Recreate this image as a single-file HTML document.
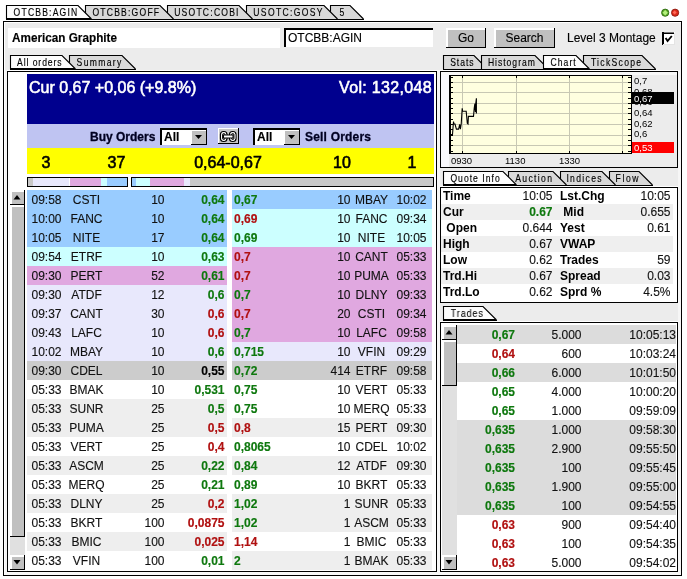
<!DOCTYPE html><html><head><meta charset="utf-8"><style>
html,body{margin:0;padding:0;background:#fff;}
body{width:687px;height:579px;overflow:hidden;position:relative;font-family:"Liberation Sans", sans-serif;}
svg{position:absolute;left:0;top:0;will-change:transform;}
text{font-family:"Liberation Sans", sans-serif;}
</style></head><body>
<svg width="687" height="579" viewBox="0 0 687 579" shape-rendering="crispEdges">
<rect x="3" y="21" width="679" height="555" fill="#ececec"/>
<rect x="3" y="21" width="679" height="1" fill="#000"/>
<rect x="3" y="575" width="679" height="1" fill="#000"/>
<rect x="3" y="21" width="1" height="555" fill="#000"/>
<rect x="681" y="21" width="1" height="555" fill="#000"/>
<rect x="4" y="70" width="3" height="505" fill="#f6f6f6"/>
<rect x="437" y="70" width="3" height="505" fill="#f6f6f6"/>
<rect x="678" y="70" width="3" height="505" fill="#f6f6f6"/>
<rect x="4" y="572" width="677" height="3" fill="#f8f8f8"/>
<rect x="4" y="22" width="677" height="1" fill="#fff"/>
<rect x="4" y="22" width="1" height="553" fill="#fff"/>
<g shape-rendering="auto">
<polygon points="330.5,19 330.5,5.5 350,5.5 363.5,19" fill="#d9d9d9" stroke="none"/><polyline points="330.5,19 330.5,5.5 350,5.5 363.5,19" fill="none" stroke="#000" stroke-width="1.1"/><text transform="translate(339.40000000000003,16) scale(0.86,1)" font-size="10" textLength="7.44" lengthAdjust="spacing" fill="#000" stroke="#000" stroke-width="0.14">5</text><polygon points="246.5,19 246.5,5.5 324,5.5 337.5,19" fill="#d9d9d9" stroke="none"/><polyline points="246.5,19 246.5,5.5 324,5.5 337.5,19" fill="none" stroke="#000" stroke-width="1.1"/><text transform="translate(253.29999999999998,16) scale(0.86,1)" font-size="10" textLength="80.47" lengthAdjust="spacing" fill="#000" stroke="#000" stroke-width="0.14">USOTC:GOSY</text><polygon points="167.5,19 167.5,5.5 239,5.5 252.5,19" fill="#d9d9d9" stroke="none"/><polyline points="167.5,19 167.5,5.5 239,5.5 252.5,19" fill="none" stroke="#000" stroke-width="1.1"/><text transform="translate(174.2,16) scale(0.86,1)" font-size="10" textLength="74.77" lengthAdjust="spacing" fill="#000" stroke="#000" stroke-width="0.14">USOTC:COBI</text><polygon points="85.5,19 85.5,5.5 160,5.5 173.5,19" fill="#d9d9d9" stroke="none"/><polyline points="85.5,19 85.5,5.5 160,5.5 173.5,19" fill="none" stroke="#000" stroke-width="1.1"/><text transform="translate(92.39999999999999,16) scale(0.86,1)" font-size="10" textLength="77.56" lengthAdjust="spacing" fill="#000" stroke="#000" stroke-width="0.14">OTCBB:GOFF</text><polygon points="6.5,19 6.5,5.5 78,5.5 91.5,19" fill="#fcfcfc" stroke="none"/><polyline points="6.5,19 6.5,5.5 78,5.5 91.5,19" fill="none" stroke="#000" stroke-width="1.1"/><text transform="translate(13.6,16) scale(0.86,1)" font-size="10" textLength="73.95" lengthAdjust="spacing" fill="#000" stroke="#000" stroke-width="0.14">OTCBB:AGIN</text><rect x="6" y="19" width="358" height="1" fill="#000"/><rect x="6" y="18" width="85" height="1" fill="#000"/>
</g>
<rect x="0" y="20" width="687" height="1" fill="#fff"/>
<rect x="3" y="21" width="679" height="1" fill="#000"/>
<g shape-rendering="auto">
<circle cx="665.2" cy="12.7" r="3.6" fill="#5aa828" stroke="#2f6a12" stroke-width="0.9"/>
<polygon points="665.2,10 667.9,12.7 665.2,15.4 662.5,12.7" fill="#b4f07c"/>
<circle cx="675.1" cy="12.7" r="3.6" fill="#dd2a1c" stroke="#8a1a10" stroke-width="0.9"/>
<polygon points="674.6,10.5 676.6,12.5 674.6,14.5 672.6,12.5" fill="#ff6a58"/>
</g>
<rect x="8" y="28" width="272" height="20" fill="#ffffff"/>
<text x="12" y="42" font-size="12" font-weight="bold" fill="#000" text-anchor="start" textLength="105" lengthAdjust="spacingAndGlyphs" stroke="#000" stroke-width="0.15">American Graphite</text>
<rect x="284" y="28" width="149" height="19" fill="#fff"/>
<rect x="284" y="28" width="149" height="2" fill="#000"/>
<rect x="284" y="28" width="2" height="19" fill="#000"/>
<text x="288" y="42" font-size="12" fill="#000" text-anchor="start" stroke="#000" stroke-width="0.12">OTCBB:AGIN</text>
<g>
<rect x="446" y="28" width="40" height="20" fill="#c0c0c0"/><rect x="446" y="28" width="40" height="2" fill="#fff"/><rect x="446" y="28" width="2" height="20" fill="#fff"/><rect x="446" y="47" width="40" height="1" fill="#000"/><rect x="485" y="28" width="1" height="20" fill="#000"/><text x="466.0" y="42" font-size="12" fill="#000" text-anchor="middle" stroke="#000" stroke-width="0.12">Go</text>
<rect x="494" y="28" width="61" height="20" fill="#c0c0c0"/><rect x="494" y="28" width="61" height="2" fill="#fff"/><rect x="494" y="28" width="2" height="20" fill="#fff"/><rect x="494" y="47" width="61" height="1" fill="#000"/><rect x="554" y="28" width="1" height="20" fill="#000"/><text x="524.5" y="42" font-size="12" fill="#000" text-anchor="middle" stroke="#000" stroke-width="0.12">Search</text>
</g>
<text x="567" y="42" font-size="12" fill="#000" text-anchor="start" stroke="#000" stroke-width="0.12">Level 3 Montage</text>
<rect x="662" y="32" width="13" height="13" fill="#fff"/>
<rect x="662" y="32" width="12" height="1" fill="#777"/>
<rect x="662" y="33" width="12" height="1" fill="#000"/>
<rect x="662" y="32" width="2" height="13" fill="#000"/>
<rect x="663" y="44" width="12" height="1" fill="#e4e4e4"/>
<rect x="674" y="33" width="1" height="12" fill="#e4e4e4"/>
<path d="M665.6 38 L667.6 41 L671.8 36" fill="none" stroke="#000" stroke-width="1.9" stroke-linecap="butt" shape-rendering="auto"/>
<g shape-rendering="auto">
<polygon points="69.5,69 69.5,55.5 122,55.5 135.5,69" fill="#d9d9d9" stroke="none"/><polyline points="69.5,69 69.5,55.5 122,55.5 135.5,69" fill="none" stroke="#000" stroke-width="1.1"/><text transform="translate(76.6,66) scale(0.86,1)" font-size="10" textLength="51.86" lengthAdjust="spacing" fill="#000" stroke="#000" stroke-width="0.14">Summary</text><polygon points="10.5,69 10.5,55.5 62,55.5 75.5,69" fill="#fcfcfc" stroke="none"/><polyline points="10.5,69 10.5,55.5 62,55.5 75.5,69" fill="none" stroke="#000" stroke-width="1.1"/><text transform="translate(17.1,66) scale(0.86,1)" font-size="10" textLength="51.74" lengthAdjust="spacing" fill="#000" stroke="#000" stroke-width="0.14">All orders</text><rect x="10" y="69" width="126" height="1" fill="#000"/><rect x="10" y="68" width="65" height="1" fill="#000"/>
<polygon points="443.5,69 443.5,55.5 474,55.5 487.5,69" fill="#d9d9d9" stroke="none"/><polyline points="443.5,69 443.5,55.5 474,55.5 487.5,69" fill="none" stroke="#000" stroke-width="1.1"/><text transform="translate(450.20000000000005,66) scale(0.86,1)" font-size="10" textLength="27.09" lengthAdjust="spacing" fill="#000" stroke="#000" stroke-width="0.14">Stats</text><polygon points="481.5,69 481.5,55.5 535,55.5 548.5,69" fill="#d9d9d9" stroke="none"/><polyline points="481.5,69 481.5,55.5 535,55.5 548.5,69" fill="none" stroke="#000" stroke-width="1.1"/><text transform="translate(487.90000000000003,66) scale(0.86,1)" font-size="10" textLength="54.65" lengthAdjust="spacing" fill="#000" stroke="#000" stroke-width="0.14">Histogram</text><polygon points="583.5,69 583.5,55.5 642,55.5 655.5,69" fill="#d9d9d9" stroke="none"/><polyline points="583.5,69 583.5,55.5 642,55.5 655.5,69" fill="none" stroke="#000" stroke-width="1.1"/><text transform="translate(590.9,66) scale(0.86,1)" font-size="10" textLength="58.37" lengthAdjust="spacing" fill="#000" stroke="#000" stroke-width="0.14">TickScope</text><polygon points="543.5,69 543.5,55.5 576,55.5 589.5,69" fill="#fcfcfc" stroke="none"/><polyline points="543.5,69 543.5,55.5 576,55.5 589.5,69" fill="none" stroke="#000" stroke-width="1.1"/><text transform="translate(550.6,66) scale(0.86,1)" font-size="10" textLength="29.19" lengthAdjust="spacing" fill="#000" stroke="#000" stroke-width="0.14">Chart</text><rect x="443" y="69" width="213" height="1" fill="#000"/><rect x="543" y="68" width="46" height="1" fill="#000"/>
</g>
<rect x="7" y="70" width="430" height="1" fill="#fff"/>
<rect x="440" y="70" width="238" height="1" fill="#fff"/>
<rect x="7" y="71" width="430" height="501" fill="#fff"/>
<rect x="7" y="71" width="430" height="1" fill="#000"/>
<rect x="7" y="571" width="430" height="1" fill="#000"/>
<rect x="7" y="71" width="1" height="501" fill="#000"/>
<rect x="436" y="71" width="1" height="501" fill="#000"/>
<rect x="27" y="74" width="407" height="50" fill="#00008e"/>
<text x="29" y="93" font-size="16" fill="#fff" text-anchor="start" stroke="#fff" stroke-width="0.55">Cur 0,67 +0,06 (+9.8%)</text>
<text x="432" y="93" font-size="16" fill="#fff" text-anchor="end" letter-spacing="0.33" stroke="#fff" stroke-width="0.55">Vol: 132,048</text>
<rect x="27" y="124" width="407" height="24" fill="#bfc4f2"/>
<text x="90" y="141" font-size="12" font-weight="bold" fill="#000022" text-anchor="start" stroke="#000022" stroke-width="0.3">Buy Orders</text>
<text x="305" y="141" font-size="12" font-weight="bold" fill="#000022" text-anchor="start" letter-spacing="0.2" stroke="#000022" stroke-width="0.3">Sell Orders</text>
<rect x="160" y="128" width="47" height="17" fill="#fff"/><rect x="160" y="128" width="47" height="2" fill="#000"/><rect x="160" y="128" width="2" height="17" fill="#000"/><rect x="191" y="130" width="15" height="14" fill="#c0c0c0"/><rect x="191" y="130" width="15" height="1" fill="#fff"/><rect x="191" y="130" width="1" height="14" fill="#fff"/><rect x="191" y="144" width="16" height="1" fill="#000"/><rect x="206" y="128" width="1" height="17" fill="#000"/><path d="M195 135 L202 135 L198.5 139 Z" fill="#000" shape-rendering="auto"/><text x="164" y="141" font-size="12" font-weight="bold" fill="#000" text-anchor="start" stroke="#000" stroke-width="0.15">All</text>
<rect x="253" y="128" width="47" height="17" fill="#fff"/><rect x="253" y="128" width="47" height="2" fill="#000"/><rect x="253" y="128" width="2" height="17" fill="#000"/><rect x="284" y="130" width="15" height="14" fill="#c0c0c0"/><rect x="284" y="130" width="15" height="1" fill="#fff"/><rect x="284" y="130" width="1" height="14" fill="#fff"/><rect x="284" y="144" width="16" height="1" fill="#000"/><rect x="299" y="128" width="1" height="17" fill="#000"/><path d="M288 135 L295 135 L291.5 139 Z" fill="#000" shape-rendering="auto"/><text x="257" y="141" font-size="12" font-weight="bold" fill="#000" text-anchor="start" stroke="#000" stroke-width="0.15">All</text>
<rect x="218" y="128" width="21" height="16" fill="#c8c8c8"/>
<rect x="218" y="128" width="21" height="1" fill="#fff"/>
<rect x="218" y="128" width="1" height="16" fill="#fff"/>
<rect x="218" y="143" width="21" height="1" fill="#000"/>
<rect x="238" y="128" width="1" height="16" fill="#000"/>
<g shape-rendering="auto"><rect x="220.5" y="131.5" width="6.5" height="10" rx="3" fill="none" stroke="#000" stroke-width="1.2"/><rect x="221.6" y="132.6" width="4.3" height="7.8" rx="2" fill="none" stroke="#fff" stroke-width="1"/><rect x="222.6" y="133.6" width="2.3" height="5.8" rx="1" fill="none" stroke="#000" stroke-width="1"/><rect x="229.5" y="131.5" width="6.5" height="10" rx="3" fill="none" stroke="#000" stroke-width="1.2"/><rect x="230.6" y="132.6" width="4.3" height="7.8" rx="2" fill="none" stroke="#fff" stroke-width="1"/><rect x="231.6" y="133.6" width="2.3" height="5.8" rx="1" fill="none" stroke="#000" stroke-width="1"/><rect x="223.5" y="135" width="9.5" height="3" fill="#fff" stroke="#000" stroke-width="1"/></g>
<rect x="27" y="148" width="407" height="26" fill="#ffff00"/>
<text x="46" y="167.5" font-size="16" fill="#000" text-anchor="middle" stroke="#000" stroke-width="0.6">3</text>
<text x="116.5" y="167.5" font-size="16" fill="#000" text-anchor="middle" stroke="#000" stroke-width="0.6">37</text>
<text x="228" y="167.5" font-size="16" fill="#000" text-anchor="middle" stroke="#000" stroke-width="0.6">0,64-0,67</text>
<text x="342" y="167.5" font-size="16" fill="#000" text-anchor="middle" stroke="#000" stroke-width="0.6">10</text>
<text x="412" y="167.5" font-size="16" fill="#000" text-anchor="middle" stroke="#000" stroke-width="0.6">1</text>
<rect x="27" y="177" width="101" height="10" fill="#000"/><rect x="28" y="178" width="5" height="8" fill="#c8c8c8"/><rect x="33" y="178" width="36" height="8" fill="#e8e8fc"/><rect x="69" y="178" width="1" height="8" fill="#fff"/><rect x="70" y="178" width="31" height="8" fill="#e0a8e0"/><rect x="101" y="178" width="6" height="8" fill="#ccffff"/><rect x="107" y="178" width="20" height="8" fill="#99ccff"/>
<rect x="131" y="177" width="303" height="10" fill="#000"/><rect x="132" y="178" width="4" height="8" fill="#99ccff"/><rect x="136" y="178" width="14" height="8" fill="#ccffff"/><rect x="150" y="178" width="34" height="8" fill="#e0a8e0"/><rect x="184" y="178" width="6" height="8" fill="#e8e8fc"/><rect x="190" y="178" width="243" height="8" fill="#c8c8c8"/>
<rect x="10" y="190" width="15" height="380" fill="#e0e0e0"/><rect x="10" y="190" width="15" height="15" fill="#c0c0c0"/><rect x="10" y="190" width="15" height="2" fill="#fff"/><rect x="10" y="190" width="2" height="15" fill="#fff"/><rect x="10" y="204" width="15" height="1" fill="#000"/><path d="M13.5 199.5 L20.5 199.5 L17.0 195 Z" fill="#000" shape-rendering="auto"/><rect x="10" y="205" width="15" height="332" fill="#c0c0c0"/><rect x="10" y="205" width="15" height="2" fill="#fff"/><rect x="10" y="205" width="2" height="332" fill="#fff"/><rect x="10" y="536" width="15" height="1" fill="#000"/><rect x="10" y="555" width="15" height="15" fill="#c0c0c0"/><rect x="10" y="555" width="15" height="2" fill="#fff"/><rect x="10" y="555" width="2" height="15" fill="#fff"/><rect x="10" y="569" width="15" height="1" fill="#000"/><path d="M13.5 560 L20.5 560 L17.0 564.5 Z" fill="#000" shape-rendering="auto"/><rect x="24" y="190" width="1" height="15" fill="#000"/><rect x="24" y="205" width="1" height="332" fill="#000"/><rect x="24" y="555" width="1" height="15" fill="#000"/>
<rect x="27" y="190" width="200" height="19" fill="#99ccff"/>
<text x="31.5" y="204" font-size="12" fill="#111" text-anchor="start" stroke="#111" stroke-width="0.12">09:58</text>
<text x="86.5" y="204" font-size="12" fill="#111" text-anchor="middle" stroke="#111" stroke-width="0.12">CSTI</text>
<text x="164.5" y="204" font-size="12" fill="#111" text-anchor="end" stroke="#111" stroke-width="0.12">10</text>
<text x="224.5" y="204" font-size="12" font-weight="bold" fill="#0e780e" text-anchor="end" stroke="#0e780e" stroke-width="0.15">0,64</text>
<rect x="27" y="209" width="200" height="19" fill="#99ccff"/>
<text x="31.5" y="223" font-size="12" fill="#111" text-anchor="start" stroke="#111" stroke-width="0.12">10:00</text>
<text x="86.5" y="223" font-size="12" fill="#111" text-anchor="middle" stroke="#111" stroke-width="0.12">FANC</text>
<text x="164.5" y="223" font-size="12" fill="#111" text-anchor="end" stroke="#111" stroke-width="0.12">10</text>
<text x="224.5" y="223" font-size="12" font-weight="bold" fill="#0e780e" text-anchor="end" stroke="#0e780e" stroke-width="0.15">0,64</text>
<rect x="27" y="228" width="200" height="19" fill="#99ccff"/>
<text x="31.5" y="242" font-size="12" fill="#111" text-anchor="start" stroke="#111" stroke-width="0.12">10:05</text>
<text x="86.5" y="242" font-size="12" fill="#111" text-anchor="middle" stroke="#111" stroke-width="0.12">NITE</text>
<text x="164.5" y="242" font-size="12" fill="#111" text-anchor="end" stroke="#111" stroke-width="0.12">17</text>
<text x="224.5" y="242" font-size="12" font-weight="bold" fill="#0e780e" text-anchor="end" stroke="#0e780e" stroke-width="0.15">0,64</text>
<rect x="27" y="247" width="200" height="19" fill="#ccffff"/>
<text x="31.5" y="261" font-size="12" fill="#111" text-anchor="start" stroke="#111" stroke-width="0.12">09:54</text>
<text x="86.5" y="261" font-size="12" fill="#111" text-anchor="middle" stroke="#111" stroke-width="0.12">ETRF</text>
<text x="164.5" y="261" font-size="12" fill="#111" text-anchor="end" stroke="#111" stroke-width="0.12">10</text>
<text x="224.5" y="261" font-size="12" font-weight="bold" fill="#0e780e" text-anchor="end" stroke="#0e780e" stroke-width="0.15">0,63</text>
<rect x="27" y="266" width="200" height="19" fill="#e0a8e0"/>
<text x="31.5" y="280" font-size="12" fill="#111" text-anchor="start" stroke="#111" stroke-width="0.12">09:30</text>
<text x="86.5" y="280" font-size="12" fill="#111" text-anchor="middle" stroke="#111" stroke-width="0.12">PERT</text>
<text x="164.5" y="280" font-size="12" fill="#111" text-anchor="end" stroke="#111" stroke-width="0.12">52</text>
<text x="224.5" y="280" font-size="12" font-weight="bold" fill="#0e780e" text-anchor="end" stroke="#0e780e" stroke-width="0.15">0,61</text>
<rect x="27" y="285" width="200" height="19" fill="#e8e8fc"/>
<text x="31.5" y="299" font-size="12" fill="#111" text-anchor="start" stroke="#111" stroke-width="0.12">09:30</text>
<text x="86.5" y="299" font-size="12" fill="#111" text-anchor="middle" stroke="#111" stroke-width="0.12">ATDF</text>
<text x="164.5" y="299" font-size="12" fill="#111" text-anchor="end" stroke="#111" stroke-width="0.12">12</text>
<text x="224.5" y="299" font-size="12" font-weight="bold" fill="#0e780e" text-anchor="end" stroke="#0e780e" stroke-width="0.15">0,6</text>
<rect x="27" y="304" width="200" height="19" fill="#e8e8fc"/>
<text x="31.5" y="318" font-size="12" fill="#111" text-anchor="start" stroke="#111" stroke-width="0.12">09:37</text>
<text x="86.5" y="318" font-size="12" fill="#111" text-anchor="middle" stroke="#111" stroke-width="0.12">CANT</text>
<text x="164.5" y="318" font-size="12" fill="#111" text-anchor="end" stroke="#111" stroke-width="0.12">30</text>
<text x="224.5" y="318" font-size="12" font-weight="bold" fill="#b01010" text-anchor="end" stroke="#b01010" stroke-width="0.15">0,6</text>
<rect x="27" y="323" width="200" height="19" fill="#e8e8fc"/>
<text x="31.5" y="337" font-size="12" fill="#111" text-anchor="start" stroke="#111" stroke-width="0.12">09:43</text>
<text x="86.5" y="337" font-size="12" fill="#111" text-anchor="middle" stroke="#111" stroke-width="0.12">LAFC</text>
<text x="164.5" y="337" font-size="12" fill="#111" text-anchor="end" stroke="#111" stroke-width="0.12">10</text>
<text x="224.5" y="337" font-size="12" font-weight="bold" fill="#b01010" text-anchor="end" stroke="#b01010" stroke-width="0.15">0,6</text>
<rect x="27" y="342" width="200" height="19" fill="#e8e8fc"/>
<text x="31.5" y="356" font-size="12" fill="#111" text-anchor="start" stroke="#111" stroke-width="0.12">10:02</text>
<text x="86.5" y="356" font-size="12" fill="#111" text-anchor="middle" stroke="#111" stroke-width="0.12">MBAY</text>
<text x="164.5" y="356" font-size="12" fill="#111" text-anchor="end" stroke="#111" stroke-width="0.12">10</text>
<text x="224.5" y="356" font-size="12" font-weight="bold" fill="#0e780e" text-anchor="end" stroke="#0e780e" stroke-width="0.15">0,6</text>
<rect x="27" y="361" width="200" height="19" fill="#cccccc"/>
<text x="31.5" y="375" font-size="12" fill="#111" text-anchor="start" stroke="#111" stroke-width="0.12">09:30</text>
<text x="86.5" y="375" font-size="12" fill="#111" text-anchor="middle" stroke="#111" stroke-width="0.12">CDEL</text>
<text x="164.5" y="375" font-size="12" fill="#111" text-anchor="end" stroke="#111" stroke-width="0.12">10</text>
<text x="224.5" y="375" font-size="12" font-weight="bold" fill="#000" text-anchor="end" stroke="#000" stroke-width="0.15">0,55</text>
<rect x="27" y="380" width="200" height="19" fill="#ffffff"/>
<text x="31.5" y="394" font-size="12" fill="#111" text-anchor="start" stroke="#111" stroke-width="0.12">05:33</text>
<text x="86.5" y="394" font-size="12" fill="#111" text-anchor="middle" stroke="#111" stroke-width="0.12">BMAK</text>
<text x="164.5" y="394" font-size="12" fill="#111" text-anchor="end" stroke="#111" stroke-width="0.12">10</text>
<text x="224.5" y="394" font-size="12" font-weight="bold" fill="#0e780e" text-anchor="end" stroke="#0e780e" stroke-width="0.15">0,531</text>
<rect x="27" y="399" width="200" height="19" fill="#eeeeee"/>
<text x="31.5" y="413" font-size="12" fill="#111" text-anchor="start" stroke="#111" stroke-width="0.12">05:33</text>
<text x="86.5" y="413" font-size="12" fill="#111" text-anchor="middle" stroke="#111" stroke-width="0.12">SUNR</text>
<text x="164.5" y="413" font-size="12" fill="#111" text-anchor="end" stroke="#111" stroke-width="0.12">25</text>
<text x="224.5" y="413" font-size="12" font-weight="bold" fill="#0e780e" text-anchor="end" stroke="#0e780e" stroke-width="0.15">0,5</text>
<rect x="27" y="418" width="200" height="19" fill="#eeeeee"/>
<text x="31.5" y="432" font-size="12" fill="#111" text-anchor="start" stroke="#111" stroke-width="0.12">05:33</text>
<text x="86.5" y="432" font-size="12" fill="#111" text-anchor="middle" stroke="#111" stroke-width="0.12">PUMA</text>
<text x="164.5" y="432" font-size="12" fill="#111" text-anchor="end" stroke="#111" stroke-width="0.12">25</text>
<text x="224.5" y="432" font-size="12" font-weight="bold" fill="#b01010" text-anchor="end" stroke="#b01010" stroke-width="0.15">0,5</text>
<rect x="27" y="437" width="200" height="19" fill="#ffffff"/>
<text x="31.5" y="451" font-size="12" fill="#111" text-anchor="start" stroke="#111" stroke-width="0.12">05:33</text>
<text x="86.5" y="451" font-size="12" fill="#111" text-anchor="middle" stroke="#111" stroke-width="0.12">VERT</text>
<text x="164.5" y="451" font-size="12" fill="#111" text-anchor="end" stroke="#111" stroke-width="0.12">25</text>
<text x="224.5" y="451" font-size="12" font-weight="bold" fill="#b01010" text-anchor="end" stroke="#b01010" stroke-width="0.15">0,4</text>
<rect x="27" y="456" width="200" height="19" fill="#eeeeee"/>
<text x="31.5" y="470" font-size="12" fill="#111" text-anchor="start" stroke="#111" stroke-width="0.12">05:33</text>
<text x="86.5" y="470" font-size="12" fill="#111" text-anchor="middle" stroke="#111" stroke-width="0.12">ASCM</text>
<text x="164.5" y="470" font-size="12" fill="#111" text-anchor="end" stroke="#111" stroke-width="0.12">25</text>
<text x="224.5" y="470" font-size="12" font-weight="bold" fill="#0e780e" text-anchor="end" stroke="#0e780e" stroke-width="0.15">0,22</text>
<rect x="27" y="475" width="200" height="19" fill="#ffffff"/>
<text x="31.5" y="489" font-size="12" fill="#111" text-anchor="start" stroke="#111" stroke-width="0.12">05:33</text>
<text x="86.5" y="489" font-size="12" fill="#111" text-anchor="middle" stroke="#111" stroke-width="0.12">MERQ</text>
<text x="164.5" y="489" font-size="12" fill="#111" text-anchor="end" stroke="#111" stroke-width="0.12">25</text>
<text x="224.5" y="489" font-size="12" font-weight="bold" fill="#0e780e" text-anchor="end" stroke="#0e780e" stroke-width="0.15">0,21</text>
<rect x="27" y="494" width="200" height="19" fill="#eeeeee"/>
<text x="31.5" y="508" font-size="12" fill="#111" text-anchor="start" stroke="#111" stroke-width="0.12">05:33</text>
<text x="86.5" y="508" font-size="12" fill="#111" text-anchor="middle" stroke="#111" stroke-width="0.12">DLNY</text>
<text x="164.5" y="508" font-size="12" fill="#111" text-anchor="end" stroke="#111" stroke-width="0.12">25</text>
<text x="224.5" y="508" font-size="12" font-weight="bold" fill="#b01010" text-anchor="end" stroke="#b01010" stroke-width="0.15">0,2</text>
<rect x="27" y="513" width="200" height="19" fill="#ffffff"/>
<text x="31.5" y="527" font-size="12" fill="#111" text-anchor="start" stroke="#111" stroke-width="0.12">05:33</text>
<text x="86.5" y="527" font-size="12" fill="#111" text-anchor="middle" stroke="#111" stroke-width="0.12">BKRT</text>
<text x="164.5" y="527" font-size="12" fill="#111" text-anchor="end" stroke="#111" stroke-width="0.12">100</text>
<text x="224.5" y="527" font-size="12" font-weight="bold" fill="#b01010" text-anchor="end" stroke="#b01010" stroke-width="0.15">0,0875</text>
<rect x="27" y="532" width="200" height="19" fill="#eeeeee"/>
<text x="31.5" y="546" font-size="12" fill="#111" text-anchor="start" stroke="#111" stroke-width="0.12">05:33</text>
<text x="86.5" y="546" font-size="12" fill="#111" text-anchor="middle" stroke="#111" stroke-width="0.12">BMIC</text>
<text x="164.5" y="546" font-size="12" fill="#111" text-anchor="end" stroke="#111" stroke-width="0.12">100</text>
<text x="224.5" y="546" font-size="12" font-weight="bold" fill="#b01010" text-anchor="end" stroke="#b01010" stroke-width="0.15">0,025</text>
<rect x="27" y="551" width="200" height="19" fill="#ffffff"/>
<text x="31.5" y="565" font-size="12" fill="#111" text-anchor="start" stroke="#111" stroke-width="0.12">05:33</text>
<text x="86.5" y="565" font-size="12" fill="#111" text-anchor="middle" stroke="#111" stroke-width="0.12">VFIN</text>
<text x="164.5" y="565" font-size="12" fill="#111" text-anchor="end" stroke="#111" stroke-width="0.12">100</text>
<text x="224.5" y="565" font-size="12" font-weight="bold" fill="#0e780e" text-anchor="end" stroke="#0e780e" stroke-width="0.15">0,01</text>
<rect x="232" y="190" width="200" height="19" fill="#99ccff"/>
<text x="234" y="204" font-size="12" font-weight="bold" fill="#0e780e" text-anchor="start" stroke="#0e780e" stroke-width="0.15">0,67</text>
<text x="350.5" y="204" font-size="12" fill="#111" text-anchor="end" stroke="#111" stroke-width="0.12">10</text>
<text x="371.5" y="204" font-size="12" fill="#111" text-anchor="middle" stroke="#111" stroke-width="0.12">MBAY</text>
<text x="426.5" y="204" font-size="12" fill="#111" text-anchor="end" stroke="#111" stroke-width="0.12">10:02</text>
<rect x="232" y="209" width="200" height="19" fill="#ccffff"/>
<text x="234" y="223" font-size="12" font-weight="bold" fill="#b01010" text-anchor="start" stroke="#b01010" stroke-width="0.15">0,69</text>
<text x="350.5" y="223" font-size="12" fill="#111" text-anchor="end" stroke="#111" stroke-width="0.12">10</text>
<text x="371.5" y="223" font-size="12" fill="#111" text-anchor="middle" stroke="#111" stroke-width="0.12">FANC</text>
<text x="426.5" y="223" font-size="12" fill="#111" text-anchor="end" stroke="#111" stroke-width="0.12">09:34</text>
<rect x="232" y="228" width="200" height="19" fill="#ccffff"/>
<text x="234" y="242" font-size="12" font-weight="bold" fill="#0e780e" text-anchor="start" stroke="#0e780e" stroke-width="0.15">0,69</text>
<text x="350.5" y="242" font-size="12" fill="#111" text-anchor="end" stroke="#111" stroke-width="0.12">10</text>
<text x="371.5" y="242" font-size="12" fill="#111" text-anchor="middle" stroke="#111" stroke-width="0.12">NITE</text>
<text x="426.5" y="242" font-size="12" fill="#111" text-anchor="end" stroke="#111" stroke-width="0.12">10:05</text>
<rect x="232" y="247" width="200" height="19" fill="#e0a8e0"/>
<text x="234" y="261" font-size="12" font-weight="bold" fill="#b01010" text-anchor="start" stroke="#b01010" stroke-width="0.15">0,7</text>
<text x="350.5" y="261" font-size="12" fill="#111" text-anchor="end" stroke="#111" stroke-width="0.12">10</text>
<text x="371.5" y="261" font-size="12" fill="#111" text-anchor="middle" stroke="#111" stroke-width="0.12">CANT</text>
<text x="426.5" y="261" font-size="12" fill="#111" text-anchor="end" stroke="#111" stroke-width="0.12">05:33</text>
<rect x="232" y="266" width="200" height="19" fill="#e0a8e0"/>
<text x="234" y="280" font-size="12" font-weight="bold" fill="#b01010" text-anchor="start" stroke="#b01010" stroke-width="0.15">0,7</text>
<text x="350.5" y="280" font-size="12" fill="#111" text-anchor="end" stroke="#111" stroke-width="0.12">10</text>
<text x="371.5" y="280" font-size="12" fill="#111" text-anchor="middle" stroke="#111" stroke-width="0.12">PUMA</text>
<text x="426.5" y="280" font-size="12" fill="#111" text-anchor="end" stroke="#111" stroke-width="0.12">05:33</text>
<rect x="232" y="285" width="200" height="19" fill="#e0a8e0"/>
<text x="234" y="299" font-size="12" font-weight="bold" fill="#0e780e" text-anchor="start" stroke="#0e780e" stroke-width="0.15">0,7</text>
<text x="350.5" y="299" font-size="12" fill="#111" text-anchor="end" stroke="#111" stroke-width="0.12">10</text>
<text x="371.5" y="299" font-size="12" fill="#111" text-anchor="middle" stroke="#111" stroke-width="0.12">DLNY</text>
<text x="426.5" y="299" font-size="12" fill="#111" text-anchor="end" stroke="#111" stroke-width="0.12">09:33</text>
<rect x="232" y="304" width="200" height="19" fill="#e0a8e0"/>
<text x="234" y="318" font-size="12" font-weight="bold" fill="#b01010" text-anchor="start" stroke="#b01010" stroke-width="0.15">0,7</text>
<text x="350.5" y="318" font-size="12" fill="#111" text-anchor="end" stroke="#111" stroke-width="0.12">20</text>
<text x="371.5" y="318" font-size="12" fill="#111" text-anchor="middle" stroke="#111" stroke-width="0.12">CSTI</text>
<text x="426.5" y="318" font-size="12" fill="#111" text-anchor="end" stroke="#111" stroke-width="0.12">09:34</text>
<rect x="232" y="323" width="200" height="19" fill="#e0a8e0"/>
<text x="234" y="337" font-size="12" font-weight="bold" fill="#0e780e" text-anchor="start" stroke="#0e780e" stroke-width="0.15">0,7</text>
<text x="350.5" y="337" font-size="12" fill="#111" text-anchor="end" stroke="#111" stroke-width="0.12">10</text>
<text x="371.5" y="337" font-size="12" fill="#111" text-anchor="middle" stroke="#111" stroke-width="0.12">LAFC</text>
<text x="426.5" y="337" font-size="12" fill="#111" text-anchor="end" stroke="#111" stroke-width="0.12">09:58</text>
<rect x="232" y="342" width="200" height="19" fill="#e8e8fc"/>
<text x="234" y="356" font-size="12" font-weight="bold" fill="#0e780e" text-anchor="start" stroke="#0e780e" stroke-width="0.15">0,715</text>
<text x="350.5" y="356" font-size="12" fill="#111" text-anchor="end" stroke="#111" stroke-width="0.12">10</text>
<text x="371.5" y="356" font-size="12" fill="#111" text-anchor="middle" stroke="#111" stroke-width="0.12">VFIN</text>
<text x="426.5" y="356" font-size="12" fill="#111" text-anchor="end" stroke="#111" stroke-width="0.12">09:29</text>
<rect x="232" y="361" width="200" height="19" fill="#cccccc"/>
<text x="234" y="375" font-size="12" font-weight="bold" fill="#0e780e" text-anchor="start" stroke="#0e780e" stroke-width="0.15">0,72</text>
<text x="350.5" y="375" font-size="12" fill="#111" text-anchor="end" stroke="#111" stroke-width="0.12">414</text>
<text x="371.5" y="375" font-size="12" fill="#111" text-anchor="middle" stroke="#111" stroke-width="0.12">ETRF</text>
<text x="426.5" y="375" font-size="12" fill="#111" text-anchor="end" stroke="#111" stroke-width="0.12">09:58</text>
<rect x="232" y="380" width="200" height="19" fill="#ffffff"/>
<text x="234" y="394" font-size="12" font-weight="bold" fill="#0e780e" text-anchor="start" stroke="#0e780e" stroke-width="0.15">0,75</text>
<text x="350.5" y="394" font-size="12" fill="#111" text-anchor="end" stroke="#111" stroke-width="0.12">10</text>
<text x="371.5" y="394" font-size="12" fill="#111" text-anchor="middle" stroke="#111" stroke-width="0.12">VERT</text>
<text x="426.5" y="394" font-size="12" fill="#111" text-anchor="end" stroke="#111" stroke-width="0.12">05:33</text>
<rect x="232" y="399" width="200" height="19" fill="#ffffff"/>
<text x="234" y="413" font-size="12" font-weight="bold" fill="#0e780e" text-anchor="start" stroke="#0e780e" stroke-width="0.15">0,75</text>
<text x="350.5" y="413" font-size="12" fill="#111" text-anchor="end" stroke="#111" stroke-width="0.12">10</text>
<text x="371.5" y="413" font-size="12" fill="#111" text-anchor="middle" stroke="#111" stroke-width="0.12">MERQ</text>
<text x="426.5" y="413" font-size="12" fill="#111" text-anchor="end" stroke="#111" stroke-width="0.12">05:33</text>
<rect x="232" y="418" width="200" height="19" fill="#eeeeee"/>
<text x="234" y="432" font-size="12" font-weight="bold" fill="#b01010" text-anchor="start" stroke="#b01010" stroke-width="0.15">0,8</text>
<text x="350.5" y="432" font-size="12" fill="#111" text-anchor="end" stroke="#111" stroke-width="0.12">15</text>
<text x="371.5" y="432" font-size="12" fill="#111" text-anchor="middle" stroke="#111" stroke-width="0.12">PERT</text>
<text x="426.5" y="432" font-size="12" fill="#111" text-anchor="end" stroke="#111" stroke-width="0.12">09:30</text>
<rect x="232" y="437" width="200" height="19" fill="#ffffff"/>
<text x="234" y="451" font-size="12" font-weight="bold" fill="#0e780e" text-anchor="start" stroke="#0e780e" stroke-width="0.15">0,8065</text>
<text x="350.5" y="451" font-size="12" fill="#111" text-anchor="end" stroke="#111" stroke-width="0.12">10</text>
<text x="371.5" y="451" font-size="12" fill="#111" text-anchor="middle" stroke="#111" stroke-width="0.12">CDEL</text>
<text x="426.5" y="451" font-size="12" fill="#111" text-anchor="end" stroke="#111" stroke-width="0.12">10:02</text>
<rect x="232" y="456" width="200" height="19" fill="#eeeeee"/>
<text x="234" y="470" font-size="12" font-weight="bold" fill="#0e780e" text-anchor="start" stroke="#0e780e" stroke-width="0.15">0,84</text>
<text x="350.5" y="470" font-size="12" fill="#111" text-anchor="end" stroke="#111" stroke-width="0.12">12</text>
<text x="371.5" y="470" font-size="12" fill="#111" text-anchor="middle" stroke="#111" stroke-width="0.12">ATDF</text>
<text x="426.5" y="470" font-size="12" fill="#111" text-anchor="end" stroke="#111" stroke-width="0.12">09:30</text>
<rect x="232" y="475" width="200" height="19" fill="#ffffff"/>
<text x="234" y="489" font-size="12" font-weight="bold" fill="#0e780e" text-anchor="start" stroke="#0e780e" stroke-width="0.15">0,89</text>
<text x="350.5" y="489" font-size="12" fill="#111" text-anchor="end" stroke="#111" stroke-width="0.12">10</text>
<text x="371.5" y="489" font-size="12" fill="#111" text-anchor="middle" stroke="#111" stroke-width="0.12">BKRT</text>
<text x="426.5" y="489" font-size="12" fill="#111" text-anchor="end" stroke="#111" stroke-width="0.12">05:33</text>
<rect x="232" y="494" width="200" height="19" fill="#eeeeee"/>
<text x="234" y="508" font-size="12" font-weight="bold" fill="#0e780e" text-anchor="start" stroke="#0e780e" stroke-width="0.15">1,02</text>
<text x="350.5" y="508" font-size="12" fill="#111" text-anchor="end" stroke="#111" stroke-width="0.12">1</text>
<text x="371.5" y="508" font-size="12" fill="#111" text-anchor="middle" stroke="#111" stroke-width="0.12">SUNR</text>
<text x="426.5" y="508" font-size="12" fill="#111" text-anchor="end" stroke="#111" stroke-width="0.12">05:33</text>
<rect x="232" y="513" width="200" height="19" fill="#eeeeee"/>
<text x="234" y="527" font-size="12" font-weight="bold" fill="#0e780e" text-anchor="start" stroke="#0e780e" stroke-width="0.15">1,02</text>
<text x="350.5" y="527" font-size="12" fill="#111" text-anchor="end" stroke="#111" stroke-width="0.12">1</text>
<text x="371.5" y="527" font-size="12" fill="#111" text-anchor="middle" stroke="#111" stroke-width="0.12">ASCM</text>
<text x="426.5" y="527" font-size="12" fill="#111" text-anchor="end" stroke="#111" stroke-width="0.12">05:33</text>
<rect x="232" y="532" width="200" height="19" fill="#ffffff"/>
<text x="234" y="546" font-size="12" font-weight="bold" fill="#b01010" text-anchor="start" stroke="#b01010" stroke-width="0.15">1,14</text>
<text x="350.5" y="546" font-size="12" fill="#111" text-anchor="end" stroke="#111" stroke-width="0.12">1</text>
<text x="371.5" y="546" font-size="12" fill="#111" text-anchor="middle" stroke="#111" stroke-width="0.12">BMIC</text>
<text x="426.5" y="546" font-size="12" fill="#111" text-anchor="end" stroke="#111" stroke-width="0.12">05:33</text>
<rect x="232" y="551" width="200" height="19" fill="#eeeeee"/>
<text x="234" y="565" font-size="12" font-weight="bold" fill="#0e780e" text-anchor="start" stroke="#0e780e" stroke-width="0.15">2</text>
<text x="350.5" y="565" font-size="12" fill="#111" text-anchor="end" stroke="#111" stroke-width="0.12">1</text>
<text x="371.5" y="565" font-size="12" fill="#111" text-anchor="middle" stroke="#111" stroke-width="0.12">BMAK</text>
<text x="426.5" y="565" font-size="12" fill="#111" text-anchor="end" stroke="#111" stroke-width="0.12">05:33</text>
<rect x="440" y="71" width="238" height="97" fill="#ececec"/>
<rect x="441" y="72" width="8" height="95" fill="#f8f8fc"/>
<rect x="441" y="72" width="236" height="3" fill="#f8f8f8"/>
<rect x="440" y="71" width="238" height="1" fill="#000"/>
<rect x="440" y="167" width="238" height="1" fill="#000"/>
<rect x="440" y="71" width="1" height="97" fill="#000"/>
<rect x="677" y="71" width="1" height="97" fill="#000"/>
<rect x="449" y="75" width="183" height="79" fill="#ffffe0"/>
<rect x="449" y="82" width="183" height="1" fill="#c8c8b4"/>
<rect x="449" y="92" width="183" height="1" fill="#c8c8b4"/>
<rect x="449" y="103" width="183" height="1" fill="#c8c8b4"/>
<rect x="449" y="113" width="183" height="1" fill="#c8c8b4"/>
<rect x="449" y="124" width="183" height="1" fill="#c8c8b4"/>
<rect x="449" y="135" width="183" height="1" fill="#c8c8b4"/>
<rect x="449" y="145" width="183" height="1" fill="#c8c8b4"/>
<rect x="462" y="75" width="1" height="79" fill="#c8c8b4"/>
<rect x="516" y="75" width="1" height="79" fill="#c8c8b4"/>
<rect x="569" y="75" width="1" height="79" fill="#c8c8b4"/>
<rect x="622" y="75" width="1" height="79" fill="#c8c8b4"/>
<rect x="449" y="75" width="183" height="1" fill="#000"/>
<rect x="449" y="153" width="183" height="1" fill="#000"/>
<rect x="449" y="75" width="2" height="79" fill="#000"/>
<rect x="631" y="75" width="1" height="79" fill="#000"/>
<rect x="451" y="77" width="2" height="1" fill="#000"/>
<rect x="628" y="77" width="3" height="1" fill="#000"/>
<rect x="451" y="82" width="2" height="1" fill="#000"/>
<rect x="628" y="82" width="3" height="1" fill="#000"/>
<rect x="451" y="87" width="2" height="1" fill="#000"/>
<rect x="628" y="87" width="3" height="1" fill="#000"/>
<rect x="451" y="92" width="2" height="1" fill="#000"/>
<rect x="628" y="92" width="3" height="1" fill="#000"/>
<rect x="451" y="98" width="2" height="1" fill="#000"/>
<rect x="628" y="98" width="3" height="1" fill="#000"/>
<rect x="451" y="103" width="2" height="1" fill="#000"/>
<rect x="628" y="103" width="3" height="1" fill="#000"/>
<rect x="451" y="108" width="2" height="1" fill="#000"/>
<rect x="628" y="108" width="3" height="1" fill="#000"/>
<rect x="451" y="113" width="2" height="1" fill="#000"/>
<rect x="628" y="113" width="3" height="1" fill="#000"/>
<rect x="451" y="119" width="2" height="1" fill="#000"/>
<rect x="628" y="119" width="3" height="1" fill="#000"/>
<rect x="451" y="124" width="2" height="1" fill="#000"/>
<rect x="628" y="124" width="3" height="1" fill="#000"/>
<rect x="451" y="129" width="2" height="1" fill="#000"/>
<rect x="628" y="129" width="3" height="1" fill="#000"/>
<rect x="451" y="135" width="2" height="1" fill="#000"/>
<rect x="628" y="135" width="3" height="1" fill="#000"/>
<rect x="451" y="140" width="2" height="1" fill="#000"/>
<rect x="628" y="140" width="3" height="1" fill="#000"/>
<rect x="451" y="145" width="2" height="1" fill="#000"/>
<rect x="628" y="145" width="3" height="1" fill="#000"/>
<rect x="451" y="151" width="2" height="1" fill="#000"/>
<rect x="628" y="151" width="3" height="1" fill="#000"/>
<rect x="462" y="75" width="1" height="3" fill="#000"/>
<rect x="462" y="151" width="1" height="3" fill="#000"/>
<rect x="516" y="75" width="1" height="3" fill="#000"/>
<rect x="516" y="151" width="1" height="3" fill="#000"/>
<rect x="569" y="75" width="1" height="3" fill="#000"/>
<rect x="569" y="151" width="1" height="3" fill="#000"/>
<rect x="622" y="75" width="1" height="3" fill="#000"/>
<rect x="622" y="151" width="1" height="3" fill="#000"/>
<polyline points="450,130 450.5,134.5 452.5,134.5 453.5,121.5 454,124 455,124 456.4,129.1 458.6,129.1 459.7,124.4 460.4,129.1 461.2,124 462.2,108.4 462.6,111.3 466.2,111.3 467.3,123.3 468,124 468.4,116.4 473.5,116.4 474.2,108.4 474.9,103.7 475.4,112 475.7,103.7 476.4,98.3 476.4,113.5 475.6,104" fill="none" stroke="#000" stroke-width="1.1" shape-rendering="auto"/>
<text x="634" y="84" font-size="9.5" fill="#000" text-anchor="start">0,7</text>
<text x="634" y="95" font-size="9.5" fill="#000" text-anchor="start">0,68</text>
<text x="634" y="105" font-size="9.5" fill="#000" text-anchor="start">0,66</text>
<text x="634" y="116" font-size="9.5" fill="#000" text-anchor="start">0,64</text>
<text x="634" y="126.5" font-size="9.5" fill="#000" text-anchor="start">0,62</text>
<text x="634" y="137" font-size="9.5" fill="#000" text-anchor="start">0,6</text>
<text x="634" y="148" font-size="9.5" fill="#000" text-anchor="start">0,58</text>
<rect x="632" y="92" width="42" height="12" fill="#000"/>
<text x="634" y="101.5" font-size="9.5" fill="#fff" text-anchor="start">0,67</text>
<rect x="632" y="142" width="42" height="11" fill="#ff0000"/>
<text x="634" y="151" font-size="9.5" fill="#fff" text-anchor="start">0,53</text>
<text x="451" y="164" font-size="9.5" fill="#000" text-anchor="start">0930</text>
<text x="505" y="164" font-size="9.5" fill="#000" text-anchor="start">1130</text>
<text x="559" y="164" font-size="9.5" fill="#000" text-anchor="start">1330</text>
<g shape-rendering="auto">
<polygon points="609.5,185 609.5,171.5 639,171.5 652.5,185" fill="#d9d9d9" stroke="none"/><polyline points="609.5,185 609.5,171.5 639,171.5 652.5,185" fill="none" stroke="#000" stroke-width="1.1"/><text transform="translate(615.6,182) scale(0.86,1)" font-size="10" textLength="26.63" lengthAdjust="spacing" fill="#000" stroke="#000" stroke-width="0.14">Flow</text><polygon points="560.5,185 560.5,171.5 602,171.5 615.5,185" fill="#d9d9d9" stroke="none"/><polyline points="560.5,185 560.5,171.5 602,171.5 615.5,185" fill="none" stroke="#000" stroke-width="1.1"/><text transform="translate(566.4,182) scale(0.86,1)" font-size="10" textLength="40.93" lengthAdjust="spacing" fill="#000" stroke="#000" stroke-width="0.14">Indices</text><polygon points="508.5,185 508.5,171.5 553,171.5 566.5,185" fill="#d9d9d9" stroke="none"/><polyline points="508.5,185 508.5,171.5 553,171.5 566.5,185" fill="none" stroke="#000" stroke-width="1.1"/><text transform="translate(515.2,182) scale(0.86,1)" font-size="10" textLength="42.79" lengthAdjust="spacing" fill="#000" stroke="#000" stroke-width="0.14">Auction</text><polygon points="443.5,185 443.5,171.5 503,171.5 516.5,185" fill="#fcfcfc" stroke="none"/><polyline points="443.5,185 443.5,171.5 503,171.5 516.5,185" fill="none" stroke="#000" stroke-width="1.1"/><text transform="translate(450.40000000000003,182) scale(0.86,1)" font-size="10" textLength="57.33" lengthAdjust="spacing" fill="#000" stroke="#000" stroke-width="0.14">Quote Info</text><rect x="443" y="185" width="210" height="1" fill="#000"/><rect x="443" y="184" width="73" height="1" fill="#000"/>
</g>
<rect x="440" y="186" width="238" height="1" fill="#fff"/>
<rect x="440" y="187" width="238" height="116" fill="#fff"/>
<rect x="440" y="187" width="238" height="1" fill="#000"/>
<rect x="440" y="302" width="238" height="1" fill="#000"/>
<rect x="440" y="187" width="1" height="116" fill="#000"/>
<rect x="677" y="187" width="1" height="116" fill="#000"/>
<text x="443" y="200" font-size="12" font-weight="bold" fill="#000" xml:space="preserve">Time</text>
<text x="552.5" y="200" font-size="12" fill="#111" text-anchor="end" stroke="#111" stroke-width="0.12">10:05</text>
<text x="560" y="200" font-size="12" font-weight="bold" fill="#000" xml:space="preserve">Lst.Chg</text>
<text x="670.5" y="200" font-size="12" fill="#111" text-anchor="end" stroke="#111" stroke-width="0.12">10:05</text>
<rect x="441" y="204" width="232" height="16" fill="#efefef"/>
<text x="443" y="216" font-size="12" font-weight="bold" fill="#000" xml:space="preserve">Cur</text>
<text x="552.5" y="216" font-size="12" font-weight="bold" fill="#0e780e" text-anchor="end" stroke="#0e780e" stroke-width="0.15">0.67</text>
<text x="560" y="216" font-size="12" font-weight="bold" fill="#000" xml:space="preserve"> Mid</text>
<text x="670.5" y="216" font-size="12" fill="#111" text-anchor="end" stroke="#111" stroke-width="0.12">0.655</text>
<text x="443" y="232" font-size="12" font-weight="bold" fill="#000" xml:space="preserve"> Open</text>
<text x="552.5" y="232" font-size="12" fill="#111" text-anchor="end" stroke="#111" stroke-width="0.12">0.644</text>
<text x="560" y="232" font-size="12" font-weight="bold" fill="#000" xml:space="preserve">Yest</text>
<text x="670.5" y="232" font-size="12" fill="#111" text-anchor="end" stroke="#111" stroke-width="0.12">0.61</text>
<rect x="441" y="236" width="232" height="16" fill="#efefef"/>
<text x="443" y="248" font-size="12" font-weight="bold" fill="#000" xml:space="preserve">High</text>
<text x="552.5" y="248" font-size="12" fill="#111" text-anchor="end" stroke="#111" stroke-width="0.12">0.67</text>
<text x="560" y="248" font-size="12" font-weight="bold" fill="#000" xml:space="preserve">VWAP</text>
<text x="670.5" y="248" font-size="12" fill="#111" text-anchor="end" stroke="#111" stroke-width="0.12"></text>
<text x="443" y="264" font-size="12" font-weight="bold" fill="#000" xml:space="preserve">Low</text>
<text x="552.5" y="264" font-size="12" fill="#111" text-anchor="end" stroke="#111" stroke-width="0.12">0.62</text>
<text x="560" y="264" font-size="12" font-weight="bold" fill="#000" xml:space="preserve">Trades</text>
<text x="670.5" y="264" font-size="12" fill="#111" text-anchor="end" stroke="#111" stroke-width="0.12">59</text>
<rect x="441" y="268" width="232" height="16" fill="#efefef"/>
<text x="443" y="280" font-size="12" font-weight="bold" fill="#000" xml:space="preserve">Trd.Hi</text>
<text x="552.5" y="280" font-size="12" fill="#111" text-anchor="end" stroke="#111" stroke-width="0.12">0.67</text>
<text x="560" y="280" font-size="12" font-weight="bold" fill="#000" xml:space="preserve">Spread</text>
<text x="670.5" y="280" font-size="12" fill="#111" text-anchor="end" stroke="#111" stroke-width="0.12">0.03</text>
<text x="443" y="296" font-size="12" font-weight="bold" fill="#000" xml:space="preserve">Trd.Lo</text>
<text x="552.5" y="296" font-size="12" fill="#111" text-anchor="end" stroke="#111" stroke-width="0.12">0.62</text>
<text x="560" y="296" font-size="12" font-weight="bold" fill="#000" xml:space="preserve">Sprd %</text>
<text x="670.5" y="296" font-size="12" fill="#111" text-anchor="end" stroke="#111" stroke-width="0.12">4.5%</text>
<g shape-rendering="auto">
<polygon points="443.5,320 443.5,306.5 483,306.5 496.5,320" fill="#fcfcfc" stroke="none"/><polyline points="443.5,320 443.5,306.5 483,306.5 496.5,320" fill="none" stroke="#000" stroke-width="1.1"/><text transform="translate(450.8,317) scale(0.86,1)" font-size="10" textLength="37.21" lengthAdjust="spacing" fill="#000" stroke="#000" stroke-width="0.14">Trades</text><rect x="443" y="320" width="54" height="1" fill="#000"/><rect x="443" y="319" width="53" height="1" fill="#000"/>
</g>
<rect x="440" y="321" width="238" height="1" fill="#fff"/>
<rect x="440" y="322" width="238" height="250" fill="#fff"/>
<rect x="440" y="322" width="238" height="1" fill="#000"/>
<rect x="440" y="571" width="238" height="1" fill="#000"/>
<rect x="440" y="322" width="1" height="250" fill="#000"/>
<rect x="677" y="322" width="1" height="250" fill="#000"/>
<rect x="442" y="325" width="15" height="245" fill="#e0e0e0"/><rect x="442" y="325" width="15" height="15" fill="#c0c0c0"/><rect x="442" y="325" width="15" height="2" fill="#fff"/><rect x="442" y="325" width="2" height="15" fill="#fff"/><rect x="442" y="339" width="15" height="1" fill="#000"/><path d="M445.5 334.5 L452.5 334.5 L449.0 330 Z" fill="#000" shape-rendering="auto"/><rect x="442" y="340" width="15" height="46" fill="#c0c0c0"/><rect x="442" y="340" width="15" height="2" fill="#fff"/><rect x="442" y="340" width="2" height="46" fill="#fff"/><rect x="442" y="385" width="15" height="1" fill="#000"/><rect x="442" y="555" width="15" height="15" fill="#c0c0c0"/><rect x="442" y="555" width="15" height="2" fill="#fff"/><rect x="442" y="555" width="2" height="15" fill="#fff"/><rect x="442" y="569" width="15" height="1" fill="#000"/><path d="M445.5 560 L452.5 560 L449.0 564.5 Z" fill="#000" shape-rendering="auto"/><rect x="456" y="325" width="1" height="15" fill="#000"/><rect x="456" y="340" width="1" height="46" fill="#000"/><rect x="456" y="555" width="1" height="15" fill="#000"/>
<rect x="457" y="325" width="219" height="19" fill="#dcdcdc"/>
<text x="515" y="339" font-size="12" font-weight="bold" fill="#0e780e" text-anchor="end" stroke="#0e780e" stroke-width="0.15">0,67</text>
<text x="581.5" y="339" font-size="12" fill="#111" text-anchor="end" stroke="#111" stroke-width="0.12">5.000</text>
<text x="676" y="339" font-size="12" fill="#111" text-anchor="end" stroke="#111" stroke-width="0.12">10:05:13</text>
<rect x="457" y="344" width="219" height="19" fill="#ffffff"/>
<text x="515" y="358" font-size="12" font-weight="bold" fill="#b01010" text-anchor="end" stroke="#b01010" stroke-width="0.15">0,64</text>
<text x="581.5" y="358" font-size="12" fill="#111" text-anchor="end" stroke="#111" stroke-width="0.12">600</text>
<text x="676" y="358" font-size="12" fill="#111" text-anchor="end" stroke="#111" stroke-width="0.12">10:03:24</text>
<rect x="457" y="363" width="219" height="19" fill="#dcdcdc"/>
<text x="515" y="377" font-size="12" font-weight="bold" fill="#0e780e" text-anchor="end" stroke="#0e780e" stroke-width="0.15">0,66</text>
<text x="581.5" y="377" font-size="12" fill="#111" text-anchor="end" stroke="#111" stroke-width="0.12">6.000</text>
<text x="676" y="377" font-size="12" fill="#111" text-anchor="end" stroke="#111" stroke-width="0.12">10:01:50</text>
<rect x="457" y="382" width="219" height="19" fill="#ffffff"/>
<text x="515" y="396" font-size="12" font-weight="bold" fill="#0e780e" text-anchor="end" stroke="#0e780e" stroke-width="0.15">0,65</text>
<text x="581.5" y="396" font-size="12" fill="#111" text-anchor="end" stroke="#111" stroke-width="0.12">4.000</text>
<text x="676" y="396" font-size="12" fill="#111" text-anchor="end" stroke="#111" stroke-width="0.12">10:00:20</text>
<rect x="457" y="401" width="219" height="19" fill="#ffffff"/>
<text x="515" y="415" font-size="12" font-weight="bold" fill="#0e780e" text-anchor="end" stroke="#0e780e" stroke-width="0.15">0,65</text>
<text x="581.5" y="415" font-size="12" fill="#111" text-anchor="end" stroke="#111" stroke-width="0.12">1.000</text>
<text x="676" y="415" font-size="12" fill="#111" text-anchor="end" stroke="#111" stroke-width="0.12">09:59:09</text>
<rect x="457" y="420" width="219" height="19" fill="#dcdcdc"/>
<text x="515" y="434" font-size="12" font-weight="bold" fill="#0e780e" text-anchor="end" stroke="#0e780e" stroke-width="0.15">0,635</text>
<text x="581.5" y="434" font-size="12" fill="#111" text-anchor="end" stroke="#111" stroke-width="0.12">1.000</text>
<text x="676" y="434" font-size="12" fill="#111" text-anchor="end" stroke="#111" stroke-width="0.12">09:58:30</text>
<rect x="457" y="439" width="219" height="19" fill="#dcdcdc"/>
<text x="515" y="453" font-size="12" font-weight="bold" fill="#0e780e" text-anchor="end" stroke="#0e780e" stroke-width="0.15">0,635</text>
<text x="581.5" y="453" font-size="12" fill="#111" text-anchor="end" stroke="#111" stroke-width="0.12">2.900</text>
<text x="676" y="453" font-size="12" fill="#111" text-anchor="end" stroke="#111" stroke-width="0.12">09:55:50</text>
<rect x="457" y="458" width="219" height="19" fill="#dcdcdc"/>
<text x="515" y="472" font-size="12" font-weight="bold" fill="#0e780e" text-anchor="end" stroke="#0e780e" stroke-width="0.15">0,635</text>
<text x="581.5" y="472" font-size="12" fill="#111" text-anchor="end" stroke="#111" stroke-width="0.12">100</text>
<text x="676" y="472" font-size="12" fill="#111" text-anchor="end" stroke="#111" stroke-width="0.12">09:55:45</text>
<rect x="457" y="477" width="219" height="19" fill="#dcdcdc"/>
<text x="515" y="491" font-size="12" font-weight="bold" fill="#0e780e" text-anchor="end" stroke="#0e780e" stroke-width="0.15">0,635</text>
<text x="581.5" y="491" font-size="12" fill="#111" text-anchor="end" stroke="#111" stroke-width="0.12">1.900</text>
<text x="676" y="491" font-size="12" fill="#111" text-anchor="end" stroke="#111" stroke-width="0.12">09:55:00</text>
<rect x="457" y="496" width="219" height="19" fill="#dcdcdc"/>
<text x="515" y="510" font-size="12" font-weight="bold" fill="#0e780e" text-anchor="end" stroke="#0e780e" stroke-width="0.15">0,635</text>
<text x="581.5" y="510" font-size="12" fill="#111" text-anchor="end" stroke="#111" stroke-width="0.12">100</text>
<text x="676" y="510" font-size="12" fill="#111" text-anchor="end" stroke="#111" stroke-width="0.12">09:54:55</text>
<rect x="457" y="515" width="219" height="19" fill="#ffffff"/>
<text x="515" y="529" font-size="12" font-weight="bold" fill="#b01010" text-anchor="end" stroke="#b01010" stroke-width="0.15">0,63</text>
<text x="581.5" y="529" font-size="12" fill="#111" text-anchor="end" stroke="#111" stroke-width="0.12">900</text>
<text x="676" y="529" font-size="12" fill="#111" text-anchor="end" stroke="#111" stroke-width="0.12">09:54:40</text>
<rect x="457" y="534" width="219" height="19" fill="#ffffff"/>
<text x="515" y="548" font-size="12" font-weight="bold" fill="#b01010" text-anchor="end" stroke="#b01010" stroke-width="0.15">0,63</text>
<text x="581.5" y="548" font-size="12" fill="#111" text-anchor="end" stroke="#111" stroke-width="0.12">100</text>
<text x="676" y="548" font-size="12" fill="#111" text-anchor="end" stroke="#111" stroke-width="0.12">09:54:35</text>
<rect x="457" y="553" width="219" height="19" fill="#ffffff"/>
<text x="515" y="567" font-size="12" font-weight="bold" fill="#b01010" text-anchor="end" stroke="#b01010" stroke-width="0.15">0,63</text>
<text x="581.5" y="567" font-size="12" fill="#111" text-anchor="end" stroke="#111" stroke-width="0.12">5.000</text>
<text x="676" y="567" font-size="12" fill="#111" text-anchor="end" stroke="#111" stroke-width="0.12">09:54:02</text>
<rect x="440" y="571" width="238" height="1" fill="#000"/>
<rect x="677" y="322" width="1" height="250" fill="#000"/>
</svg></body></html>
